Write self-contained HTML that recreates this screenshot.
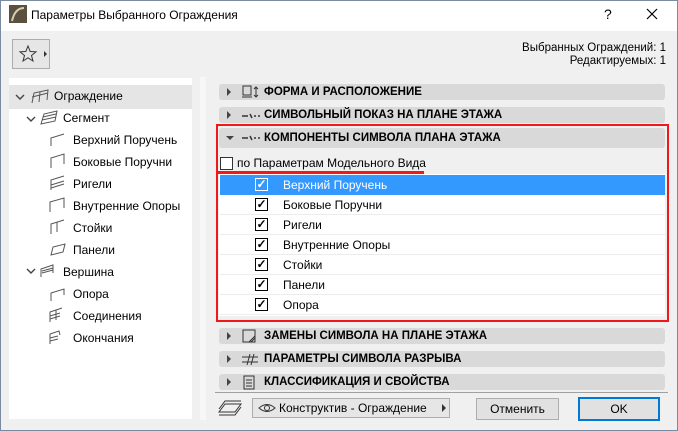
<!DOCTYPE html>
<html><head><meta charset="utf-8"><style>
*{margin:0;padding:0;box-sizing:border-box}
body{width:678px;height:431px;overflow:hidden;background:#f0f0f0;font-family:"Liberation Sans",sans-serif;font-size:12px;color:#000;position:relative}
.a{position:absolute}
#win{position:absolute;left:0;top:0;width:678px;height:431px;border:1px solid #7a8a9f}
.title{left:1px;top:1px;width:676px;height:30px;background:#fff}
.tree{left:9px;top:78px;width:183px;height:341px;background:#fff}
.ti{position:absolute;font-size:12px;white-space:nowrap}
.bar{position:absolute;left:219px;width:446px;background:#d9d9d9;border-radius:3px;font-weight:bold;font-size:11.5px;white-space:nowrap}
.bar .tr{position:absolute;left:8px;top:4px;width:0;height:0;border-left:4px solid #444;border-top:4px solid transparent;border-bottom:4px solid transparent}
.bar .tx{position:absolute;left:45px;top:2px}
.bar svg{position:absolute;left:22px;top:1px}
.row{position:absolute;left:220px;width:445px;height:20px;border-bottom:1px solid #ececec;white-space:nowrap}
.row .cb{position:absolute;left:35px;top:3px;width:13px;height:13px;border:1px solid #000;background:#fff;font-size:12px;line-height:11px;text-align:center;font-weight:bold}
.row .t{position:absolute;left:63px;top:3px}
.btn{position:absolute;height:22px;border:1px solid #adadad;background:#e1e1e1;text-align:center;line-height:20px;font-size:12px}
</style></head><body>
<div id="win"></div>
<div class="a title"></div>
<svg class="a" style="left:9px;top:5px" width="18" height="18"><rect width="18" height="18" fill="#5a5040"/><path d="M3 16 Q6 3 15 3" stroke="#d8cdb0" stroke-width="2" fill="none"/></svg>
<div class="a" style="left:31px;top:8px;font-size:12px">Параметры Выбранного Ограждения</div>
<div class="a" style="left:604px;top:6px;font-size:14px">?</div>
<svg class="a" style="left:646px;top:8px" width="12" height="12"><path d="M1 1L11 11M11 1L1 11" stroke="#000" stroke-width="1.2"/></svg>

<div class="a" style="left:12px;top:39px;width:38px;height:30px;border:1px solid #adadad;background:#e6e6e6"></div>
<svg class="a" style="left:19px;top:45px" width="18" height="17"><path d="M9 1 L11.2 6.5 L17 6.8 L12.5 10.5 L14 16 L9 12.8 L4 16 L5.5 10.5 L1 6.8 L6.8 6.5Z" fill="none" stroke="#333"/></svg>
<div class="a" style="left:44px;top:51px;border-left:3px solid #333;border-top:3px solid transparent;border-bottom:3px solid transparent"></div>

<div class="a" style="right:12px;top:42px;text-align:right;font-size:11.5px;line-height:13px">Выбранных Ограждений: 1<br>Редактируемых: 1</div>

<div class="a tree"></div>
<div class="a" style="left:9px;top:85px;width:183px;height:24px;background:#e5e5e5"></div>
<div class="a" style="left:200px;top:77px;width:6px;height:343px;background:#f7f7f7"></div>
<svg class="a" style="left:0;top:0" width="200" height="431" fill="none" stroke="#555">
<path d="M16 95l4 4 4-4M27 117l4 4 4-4M27 269l4 4 4-4" stroke="#444" stroke-width="1.4"/>
<path d="M32 103l2-10 14-3-1 10M32 97l16-4M40 92l-1 10" />
<path d="M41 124l3-10 13-3-2 10zM42 120l14-3M43 117l13-3"/>
<path d="M51 146v-8l13-4"/><path d="M51 168v-10l13-4v10"/><path d="M51 190v-10l13-4M51 185l13-4M51 188l13-4"/>
<path d="M50 212v-10l14-4v10"/><path d="M51 234v-10l13-4M57 232v-10"/><path d="M51 255l2-8 12-3-2 8z"/>
<path d="M41 277v-8l12-4v8M42 273l11-3M42 271l11-3"/><path d="M51 301v-8l13-4v6"/>
<path d="M50 322v-10l12-4M50 316l10-3M50 319l10-3M56 320v-10"/><path d="M50 344v-10l9-3 1 4M50 338l8-2M50 341l8-2"/>
</svg>
<div class="ti" style="left:54px;top:89px">Ограждение</div>
<div class="ti" style="left:63px;top:111px">Сегмент</div>
<div class="ti" style="left:73px;top:133px">Верхний Поручень</div>
<div class="ti" style="left:73px;top:155px">Боковые Поручни</div>
<div class="ti" style="left:73px;top:177px">Ригели</div>
<div class="ti" style="left:73px;top:199px">Внутренние Опоры</div>
<div class="ti" style="left:73px;top:221px">Стойки</div>
<div class="ti" style="left:73px;top:243px">Панели</div>
<div class="ti" style="left:63px;top:265px">Вершина</div>
<div class="ti" style="left:73px;top:287px">Опора</div>
<div class="ti" style="left:73px;top:309px">Соединения</div>
<div class="ti" style="left:73px;top:331px">Окончания</div>

<div class="bar" style="top:84px;height:16px"><div class="tr"></div><svg width="20" height="15" fill="none" stroke="#333"><rect x="2" y="1" width="8" height="9"/><path d="M1 12h10M15 2v10M13 4l2-2 2 2M13 10l2 2 2-2"/></svg><div class="tx">ФОРМА И РАСПОЛОЖЕНИЕ</div></div>
<div class="bar" style="top:107px;height:16px"><div class="tr"></div><svg width="20" height="15" stroke="#333"><path d="M1 8h6M9 6l2 4M13 8h2M17 8h2" stroke-width="1.5"/></svg><div class="tx">СИМВОЛЬНЫЙ ПОКАЗ НА ПЛАНЕ ЭТАЖА</div></div>
<div class="a" style="left:216px;top:124px;width:453px;height:198px;border:2px solid #f01818"></div>
<div class="bar" style="top:128px;height:20px"><div class="tr" style="left:7px;top:8px;border-left:4px solid transparent;border-right:4px solid transparent;border-top:4px solid #444;border-bottom:0"></div><svg width="20" height="18" stroke="#333" style="top:2px"><path d="M1 8h6M9 6l2 4M13 8h2M17 8h2" stroke-width="1.5"/></svg><div class="tx" style="top:4px">КОМПОНЕНТЫ СИМВОЛА ПЛАНА ЭТАЖА</div></div>
<div class="a" style="left:220px;top:157px;width:13px;height:13px;border:1px solid #333;background:#fff"></div>
<div class="a" style="left:237px;top:156px">по Параметрам Модельного Вида</div>
<div class="a" style="left:218px;top:171px;width:206px;height:3px;background:#f01818"></div>
<div class="a" style="left:219px;top:174px;width:446px;height:142px;background:#fff"></div>
<div class="row" style="top:175px;background:#3399ff;color:#fff;border-color:#3399ff"><div class="cb" style="border-color:#fff;background:#3399ff;color:#fff">✓</div><div class="t">Верхний Поручень</div></div>
<div class="row" style="top:195px"><div class="cb">✓</div><div class="t">Боковые Поручни</div></div>
<div class="row" style="top:215px"><div class="cb">✓</div><div class="t">Ригели</div></div>
<div class="row" style="top:235px"><div class="cb">✓</div><div class="t">Внутренние Опоры</div></div>
<div class="row" style="top:255px"><div class="cb">✓</div><div class="t">Стойки</div></div>
<div class="row" style="top:275px"><div class="cb">✓</div><div class="t">Панели</div></div>
<div class="row" style="top:295px"><div class="cb">✓</div><div class="t">Опора</div></div>

<div class="bar" style="top:328px;height:16px"><div class="tr"></div><svg width="20" height="15" fill="none" stroke="#333"><rect x="2" y="1" width="12" height="12"/><path d="M8 13l6-6M10 13l4-4M14 1v12" /></svg><div class="tx">ЗАМЕНЫ СИМВОЛА НА ПЛАНЕ ЭТАЖА</div></div>
<div class="bar" style="top:351px;height:16px"><div class="tr"></div><svg width="20" height="15" fill="none" stroke="#333"><path d="M1 5h16M1 10h16M9 2l-3 11M13 2l-3 11"/></svg><div class="tx">ПАРАМЕТРЫ СИМВОЛА РАЗРЫВА</div></div>
<div class="bar" style="top:374px;height:16px"><div class="tr"></div><svg width="20" height="15" fill="none" stroke="#333"><rect x="3" y="1" width="10" height="13"/><path d="M5 5h6M5 8h6M5 11h6"/></svg><div class="tx">КЛАССИФИКАЦИЯ И СВОЙСТВА</div></div>
<div class="a" style="left:215px;top:392px;width:453px;height:1px;background:#a0a0a0"></div>

<svg class="a" style="left:217px;top:399px" width="26" height="18" fill="none" stroke="#333"><path d="M2 13l6-8h16l-6 8zM2 10l6-8h16M2 16h16l6-8"/></svg>
<div class="btn" style="left:252px;top:398px;width:198px;height:20px;background:#e6e6e6;text-align:left;padding-left:26px;line-height:18px">Конструктив - Ограждение</div>
<svg class="a" style="left:258px;top:403px" width="18" height="10" fill="none" stroke="#333"><path d="M1 5Q9-2 17 5Q9 12 1 5Z"/><circle cx="9" cy="5" r="2.5"/></svg>
<div class="a" style="left:442px;top:404px;border-left:4px solid #333;border-top:4px solid transparent;border-bottom:4px solid transparent"></div>
<div class="btn" style="left:476px;top:398px;width:83px">Отменить</div>
<div class="btn" style="left:578px;top:397px;width:82px;height:24px;border:2px solid #0078d7;line-height:20px">OK</div>
</body></html>
